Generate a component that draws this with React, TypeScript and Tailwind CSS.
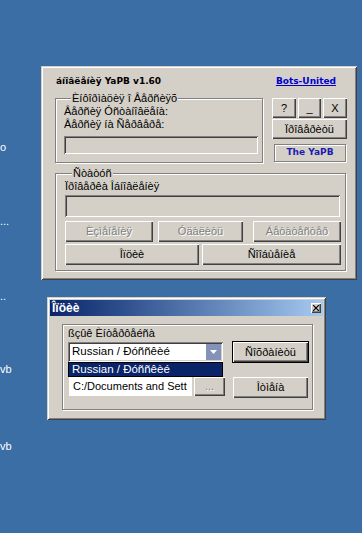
const raised =
  "bg-[#d4d0c8] shadow-[inset_1px_1px_0_#fff,inset_-1px_-1px_0_#404040,inset_-2px_-2px_0_#808080]";
const sunken =
  "shadow-[inset_1px_1px_0_#808080,inset_-1px_-1px_0_#fff,inset_2px_2px_0_#404040,inset_-2px_-2px_0_#d4d0c8]";
const etched = "border border-[#808080] shadow-[inset_1px_1px_0_#fff,1px_1px_0_#fff]";
const frame =
  "bg-[#d4d0c8] shadow-[inset_1px_1px_0_#d4d0c8,inset_-1px_-1px_0_#404040,inset_2px_2px_0_#fff,inset_-2px_-2px_0_#808080]";
const disabled = "text-[#808080] [text-shadow:1px_1px_0_#fff]";

function Btn({
  label,
  className = "",
  off = false,
}: {
  label: string;
  className?: string;
  off?: boolean;
}) {
  return (
    <div className={`flex shrink-0 items-center justify-center ${raised} ${off ? disabled : ""} ${className}`}>
      {label}
    </div>
  );
}

function Group({
  title,
  className = "",
  children,
}: {
  title: string;
  className?: string;
  children: React.ReactNode;
}) {
  return (
    <div className={`${etched} ${className}`}>
      <span className="-mt-[7px] ml-[7px] block w-fit bg-[#d4d0c8] px-[1px] leading-[13px]">{title}</span>
      {children}
    </div>
  );
}

export default function App() {
  return (
    <div className="relative h-[533px] w-[362px] overflow-hidden bg-[#3a6ea5] font-['Liberation_Sans',Arial,sans-serif] text-[11px] text-black">
      {/* подписи значков на рабочем столе */}
      <span className="absolute left-0 top-[139px] text-white">o</span>
      <span className="absolute left-0 top-[213px] text-white">...</span>
      <span className="absolute left-0 top-[288px] text-white">..</span>
      <span className="absolute left-0 top-[361px] text-white">vb</span>
      <span className="absolute left-0 top-[438px] text-white">vb</span>

      {/* главное окно */}
      <div className={`absolute left-[41px] top-[66px] flex h-[214px] w-[316px] flex-col px-[14px] pt-[6px] ${frame}`}>
        <div className="flex h-[19px] items-center justify-between pl-[1px] pr-[7px]">
          <span className="font-['DejaVu_Sans',sans-serif] text-[9px] font-bold">áíîâëåíèÿ YaPB v1.60</span>
          <span className="font-['DejaVu_Sans',sans-serif] text-[9px] font-bold text-[#0000cc] underline">
            Bots-United
          </span>
        </div>

        <div className="mt-[7px] flex gap-[9px]">
          <Group title="Èíôîðìàöèÿ î Âåðñèÿõ" className="w-[208px] px-[8px] pb-[8px]">
            <div className="leading-[13px]">Âåðñèÿ Óñòàíîâëåíà:</div>
            <div className="leading-[13px]">Âåðñèÿ íà Ñåðâåðå:</div>
            <div className={`mt-[5px] h-[18px] w-[194px] ${sunken}`} />
          </Group>

          <div className="flex w-[75px] flex-col">
            <div className="flex gap-[2px]">
              <Btn label="?" className="h-[20px] w-[24px]" />
              <Btn label="_" className="h-[20px] w-[23px]" />
              <Btn label="X" className="h-[20px] w-[24px]" />
            </div>
            <Btn label="Ïðîâåðèòü" className="mt-[1px] h-[20px]" />
            <div className={`ml-[2px] mr-[1px] mt-[5px] flex h-[18px] items-center justify-center font-['DejaVu_Sans',sans-serif] text-[9px] font-bold text-[#1c1cb0] ${etched}`}>
              The YaPB
            </div>
          </div>
        </div>

        <Group title="Ñòàòóñ" className="mt-[10px] w-[291px] pb-[5px] pl-[9px]">
          <div className="leading-[13px]">Ïðîâåðêà Îáíîâëåíèÿ</div>
          <div className={`mt-[2px] h-[22px] w-[275px] ${sunken}`} />
          <div className="mt-[4px] flex h-[21px]">
            <Btn label="Èçìåíåíèÿ" off className="w-[88px]" />
            <Btn label="Óäàëèòü" off className="ml-[5px] w-[85px]" />
            <Btn label="Áåòàòåñòåð" off className="ml-[10px] w-[88px]" />
          </div>
          <div className="mt-[2px] flex h-[21px] gap-[3px]">
            <Btn label="Îïöèè" className="w-[134px]" />
            <Btn label="Ñîîáùåíèå" className="w-[139px]" />
          </div>
        </Group>
      </div>

      {/* окно опций */}
      <div className={`absolute left-[47px] top-[297px] flex h-[123px] w-[279px] flex-col p-[3px] ${frame}`}>
        <div className="flex h-[16px] items-center justify-between bg-gradient-to-r from-[#0a246a] to-[#a6caf0] pl-[2px] pr-[2px]">
          <span className="text-[12px] font-bold text-white">Îïöèè</span>
          <div className={`flex h-[10px] w-[10px] items-center justify-center ${raised}`}>
            <svg width="6" height="6" viewBox="0 0 6 6">
              <path d="M0 0L6 6M6 0L0 6" stroke="#000" strokeWidth="1.2" />
            </svg>
          </div>
        </div>

        <div className={`ml-[12px] mt-[8px] h-[86px] w-[251px] pl-[5px] pt-[2px] ${etched}`}>
          <div className="leading-[13px]">ßçûê Èíòåðôåéñà</div>
          <div className="mt-[2px] flex">
            <div className={`relative flex h-[20px] w-[155px] bg-white ${sunken}`}>
              <span className="flex flex-1 items-center pl-[4px] text-[11.5px]">Russian / Ðóññêèé</span>
              <div className="m-[2px] flex w-[15px] items-center justify-center bg-[#8491b9]">
                <svg width="7" height="4" viewBox="0 0 7 4">
                  <path d="M0 0H7L3.5 4Z" fill="#fff" />
                </svg>
              </div>
              <div className="absolute left-0 top-full flex h-[15px] w-full items-center border border-black bg-[#0a246a] pl-[3px] text-[11.5px] text-white">
                Russian / Ðóññêèé
              </div>
            </div>
            <Btn label="Ñîõðàíèòü" className="ml-[10px] h-[20px] w-[75px] outline outline-1 outline-black" />
          </div>
          <div className="mt-[15px] flex">
            <div className="ml-[1px] flex h-[19px] w-[123px] items-center overflow-hidden whitespace-nowrap bg-white pl-[4px] text-[11px]">
              C:/Documents and Sett
            </div>
            <Btn label="..." off className="ml-[2px] h-[19px] w-[31px]" />
            <Btn label="Îòìåíà" className="ml-[8px] h-[21px] w-[75px]" />
          </div>
        </div>
      </div>
    </div>
  );
}
